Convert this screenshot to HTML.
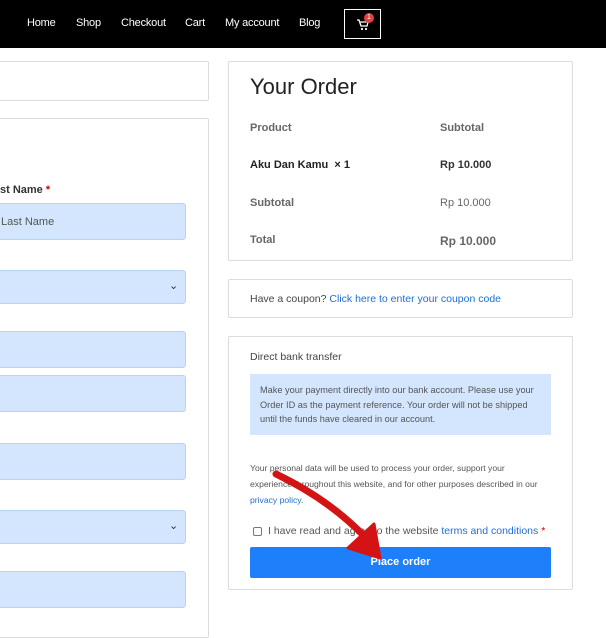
<html><head><style>
body{margin:0;width:606px;height:622px;overflow:hidden;background:#fff;font-family:"Liberation Sans",sans-serif;position:relative}
div,span{position:absolute;box-sizing:border-box}
.nav{left:0;top:0;width:606px;height:48px;background:#000}
.nav span{color:#fff;font-size:11px;top:17px;letter-spacing:-0.2px}
.box{border:1px solid #dcdcdc;border-radius:2px;background:#fff}
.in{left:-4px;width:190px;background:#d3e6fd;border:1px solid #b9d3f2;border-radius:3px}
.t{font-size:11px;color:#444}
.b{font-weight:bold}
</style></head><body>
<div class="nav">
<span style="left:27px">Home</span><span style="left:76px">Shop</span><span style="left:121px">Checkout</span><span style="left:185px">Cart</span><span style="left:225px">My account</span><span style="left:299px">Blog</span>
<div style="left:344px;top:9px;width:37px;height:30px;border:1px solid #fff">
<svg style="position:absolute;left:12px;top:9px" width="12" height="12" viewBox="0 0 12 12"><path d="M0 1h2l2 6h6l1-4H3" stroke="#fff" stroke-width="1.3" fill="none"/><circle cx="5" cy="10" r="1.1" fill="#fff"/><circle cx="9" cy="10" r="1.1" fill="#fff"/></svg>
<div style="left:19px;top:3px;width:10px;height:10px;border-radius:50%;background:#e04040;color:#fff;font-size:7px;text-align:center;line-height:10px">1</div></div>
</div>
<div class="box" style="left:-2px;top:61px;width:211px;height:40px"></div>
<div class="box" style="left:-2px;top:118px;width:211px;height:520px"></div>
<span class="t b" style="left:0;top:184px;color:#333">st Name <span style="position:static;color:#c00">*</span></span>
<div class="in" style="top:203px;height:37px"><span class="t" style="left:4px;top:12px;color:#555">Last Name</span></div>
<div class="in" style="top:270px;height:34px"><span style="left:172px;top:8px;font-size:11px;color:#333">⌄</span></div>
<div class="in" style="top:331px;height:37px"></div>
<div class="in" style="top:375px;height:37px"></div>
<div class="in" style="top:443px;height:37px"></div>
<div class="in" style="top:510px;height:34px"><span style="left:172px;top:8px;font-size:11px;color:#333">⌄</span></div>
<div class="in" style="top:571px;height:37px"></div>

<div class="box" style="left:228px;top:61px;width:345px;height:200px">
<span style="left:21px;top:12px;font-size:22px;color:#222">Your Order</span>
<span class="t b" style="left:21px;top:60px;color:#666">Product</span><span class="t b" style="left:211px;top:60px;color:#666">Subtotal</span>
<span class="t b" style="left:21px;top:97px;color:#222">Aku Dan Kamu &nbsp;× 1</span><span class="t b" style="left:211px;top:97px;color:#333">Rp 10.000</span>
<span class="t b" style="left:21px;top:135px;color:#666">Subtotal</span><span class="t" style="left:211px;top:135px;color:#666">Rp 10.000</span>
<span class="t b" style="left:21px;top:172px;color:#666">Total</span><span class="b" style="left:211px;top:172px;font-size:12px;color:#666">Rp 10.000</span>
</div>
<div class="box" style="left:228px;top:279px;width:345px;height:39px"><span class="t" style="left:21px;top:13px;font-size:10.5px">Have a coupon? <span style="position:static;color:#1e6fd9">Click here to enter your coupon code</span></span></div>
<div class="box" style="left:228px;top:336px;width:345px;height:254px">
<span class="t" style="left:21px;top:14px;font-size:10.5px">Direct bank transfer</span>
<div style="left:21px;top:37px;width:301px;height:61px;background:#d3e6fd;padding:9px 10px;font-size:9.2px;line-height:14.5px;color:#555;position:absolute">Make your payment directly into our bank account. Please use your Order ID as the payment reference. Your order will not be shipped until the funds have cleared in our account.</div>
<div style="left:21px;top:123px;width:296px;font-size:8.6px;line-height:16px;color:#555">Your personal data will be used to process your order, support your experience throughout this website, and for other purposes described in our <span style="position:static;color:#1e6fd9">privacy policy</span>.</div>
<div style="left:24px;top:190px;width:9px;height:9px;border:1px solid #777;border-radius:2px"></div>
<span style="left:39px;top:188px;font-size:10.5px;color:#555">I have read and agree to the website <span style="position:static;color:#1e6fd9">terms and conditions</span> <span style="position:static;color:#c00">*</span></span>
<div style="left:21px;top:210px;width:301px;height:31px;background:#1e7ffa;border-radius:2px;color:#fff;font-size:11px;font-weight:bold;text-align:center;line-height:31px">Place order</div>
</div>
<svg style="position:absolute;left:0;top:0" width="606" height="622"><path d="M276 474 Q330 500 366 538" stroke="#d41414" stroke-width="7" fill="none" stroke-linecap="round"/><path d="M348 548 L380 558 L374 524 Z" fill="#d41414" stroke="#d41414" stroke-width="3" stroke-linejoin="round"/></svg>
</body></html>
